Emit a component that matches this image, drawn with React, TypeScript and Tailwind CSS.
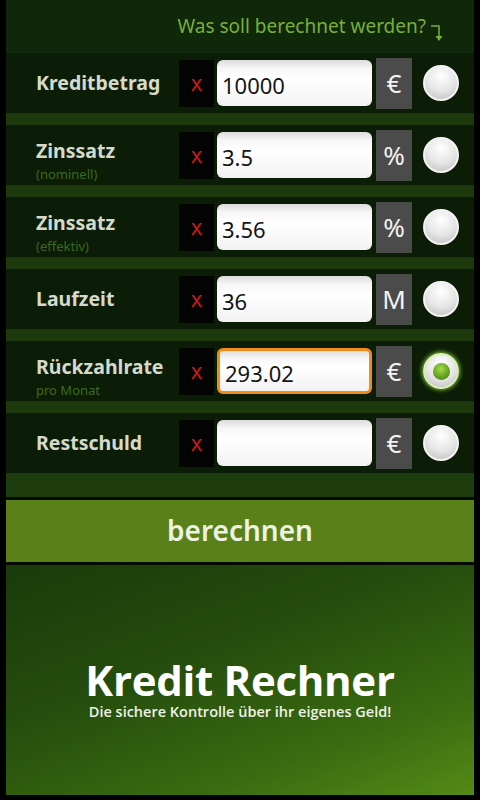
import React from "react";

/* Kredit Rechner — Eingabemaske mit sechs Feldern, Button und Banner */

type Feld = { label: string; sub?: string; value: string; unit: string; aktiv?: boolean };

const FELDER: Feld[] = [
  { label: "Kreditbetrag", value: "10000", unit: "€" },
  { label: "Zinssatz", sub: "(nominell)", value: "3.5", unit: "%" },
  { label: "Zinssatz", sub: "(effektiv)", value: "3.56", unit: "%" },
  { label: "Laufzeit", value: "36", unit: "M" },
  { label: "Rückzahlrate", sub: "pro Monat", value: "293.02", unit: "€", aktiv: true },
  { label: "Restschuld", value: "", unit: "€" },
];

const schrift = { fontFamily: '"Noto Sans", "Open Sans", sans-serif' };

function Radio({ an }: { an?: boolean }) {
  return (
    <div
      className={
        "flex h-[36px] w-[36px] items-center justify-center rounded-full border-[2px] bg-[radial-gradient(circle_at_50%_30%,#ffffff_0%,#e4e4e4_55%,#b9b9b9_100%)] " +
        (an ? "border-[#d9f0b0] shadow-[0_0_4px_1px_#7fc23a]" : "border-[#f4f4f4]")
      }
    >
      {an && (
        <div className="h-[17px] w-[17px] rounded-full bg-[radial-gradient(circle_at_45%_35%,#a6dc4a_0%,#5f9e1c_60%,#3f7410_100%)]" />
      )}
    </div>
  );
}

function Zeile({ f }: { f: Feld }) {
  return (
    <div className="flex h-[60px] items-center bg-[#0b1d06]">
      <div className={"flex w-[173px] flex-col justify-center pl-[30px] " + (f.sub ? "pt-[12px]" : "")}>
        <span className="text-[19.5px] font-bold leading-[22px] text-[#d6dacb]">{f.label}</span>
        {f.sub && <span className="mt-[4px] text-[13px] leading-[16px] text-[#3b6a1f]">{f.sub}</span>}
      </div>
      <div className="flex h-[47px] w-[35px] items-center justify-center bg-[#040404] pb-[2px] text-[22px] leading-none text-[#c8161d]">
        x
      </div>
      <div
        className={
          "ml-[3px] flex h-[46px] w-[155px] items-center rounded-[6px] bg-[linear-gradient(#dcdcdc_0%,#f6f6f6_18%,#ffffff_40%,#f2f2f2_100%)] pl-[5px] pt-[4px] text-[22px] text-[#151515] " +
          (f.aktiv ? "border-[3px] border-[#f08c1c]" : "")
        }
      >
        {f.value}
      </div>
      <div className="ml-[4px] flex h-[51px] w-[36px] items-center justify-center bg-[#4b4b4b] text-[26px] leading-none text-[#f2f2f2]">
        {f.unit}
      </div>
      <div className="ml-[11px] flex">
        <Radio an={f.aktiv} />
      </div>
    </div>
  );
}

export default function App() {
  return (
    <div className="flex h-[800px] w-[480px] flex-col overflow-hidden bg-black" style={schrift}>
      <div className="h-[2px] bg-[#d8d8d8]" />
      <div className="flex flex-1 flex-col px-[6px]">
        {/* Kopf mit Hinweis */}
        <div className="flex h-[53px] items-center justify-end bg-[#0f2809] pr-[30px]">
          <span className="text-[19px] text-[#7aae3a]">Was soll berechnet werden?</span>
          <svg width="14" height="22" viewBox="0 0 14 22" className="ml-[4px] mt-[12px]" aria-hidden>
            <path d="M1 4 H9 V16" fill="none" stroke="#7aae3a" strokeWidth="1.5" />
            <path d="M5.5 14 L9 19 L12.5 14 Z" fill="#7aae3a" />
          </svg>
        </div>

        {/* Eingabezeilen */}
        <div className="flex flex-col gap-[12px] bg-[#1c3a0e]">
          {FELDER.map((f, i) => (
            <Zeile key={i} f={f} />
          ))}
        </div>
        <div className="h-[24px] bg-[#1e3d0e]" />
        <div className="h-[3px] bg-[#050a02]" />

        {/* Button */}
        <button className="flex h-[62px] items-center justify-center bg-[#5a801a] pb-[2px] text-[28px] font-semibold text-[#eef2e2]">
          berechnen
        </button>
        <div className="h-[3px] bg-[#050a02]" />

        {/* Banner */}
        <div
          className="flex h-[230px] flex-col items-center justify-center bg-[linear-gradient(160deg,#1a3a0b_0%,#254d0d_40%,#3a6b11_75%,#548a16_100%)] pt-[20px]"
          style={{ fontFamily: '"Open Sans", "Noto Sans", sans-serif' }}
        >
          <div className="text-[42px] font-bold leading-[40px] tracking-[-0.3px] text-white">Kredit Rechner</div>
          <div className="mt-[3px] text-[14.5px] font-semibold leading-[18px] text-[#eef2e6]">
            Die sichere Kontrolle über ihr eigenes Geld!
          </div>
        </div>
        <div className="h-[5px]" />
      </div>
    </div>
  );
}
